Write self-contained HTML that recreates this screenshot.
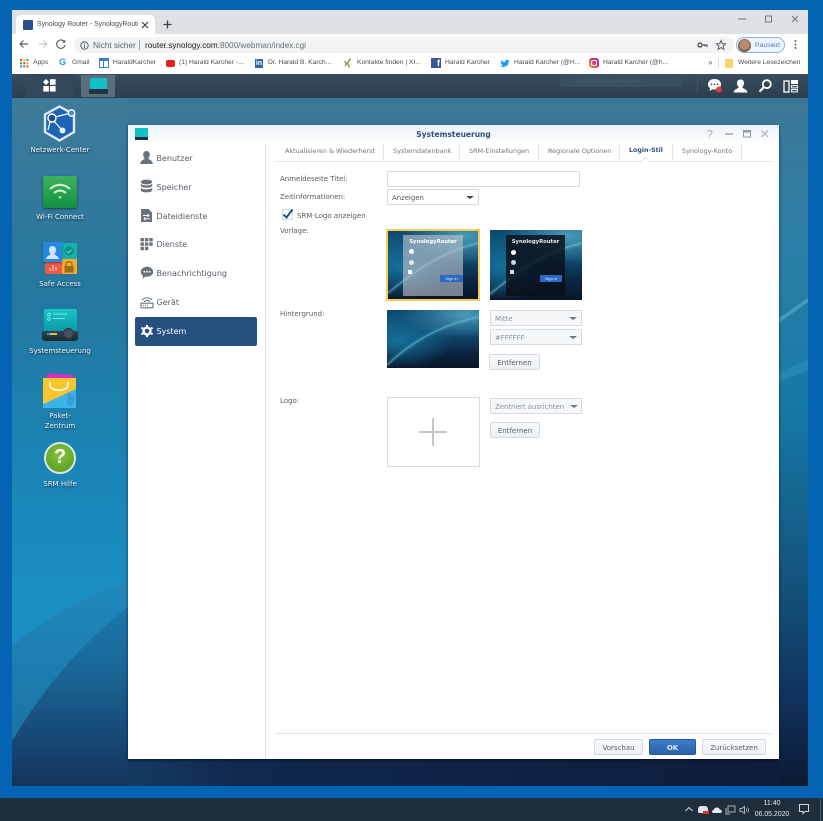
<!DOCTYPE html>
<html lang="de"><head><meta charset="utf-8"><title>Synology Router</title>
<style>
*{box-sizing:border-box}
html,body{margin:0;padding:0;width:823px;height:821px;overflow:hidden;background:#0563b4;font-family:"Liberation Sans","DejaVu Sans",sans-serif}
.a{position:absolute}
.t{position:absolute;white-space:nowrap}
.bm{position:absolute;top:58px;font-size:6.7px;color:#4a4d50;white-space:nowrap;line-height:10px}
.ic{position:absolute;top:58px;width:10px;height:10px}
.dl{position:absolute;width:100px;text-align:center;color:#f2f6f8;font-size:7px;line-height:10px;text-shadow:0 1px 2px #123;font-family:"DejaVu Sans",sans-serif;left:10px}
.nav{position:absolute;left:156.5px;font-size:8px;color:#555e68;font-family:"DejaVu Sans",sans-serif;line-height:12px;white-space:nowrap}
.tab{position:absolute;top:146px;font-size:6.45px;color:#6c7680;font-family:"DejaVu Sans",sans-serif;line-height:10px;white-space:nowrap}
.sep{position:absolute;top:144px;width:1px;height:16px;background:#e3e7eb}
.lb{position:absolute;left:280px;font-size:7px;color:#555e66;font-family:"DejaVu Sans",sans-serif;line-height:10px;white-space:nowrap}
.inp{position:absolute;background:#fff;border:1px solid #d4dbe2;border-radius:1px;font-size:6.9px;color:#4f5860;font-family:"DejaVu Sans",sans-serif;line-height:16px;padding-left:4px;white-space:nowrap}
.dis{background:#f6f7f9;color:#8a9299}
.car{position:absolute;right:4px;top:6px;width:0;height:0;border-left:4px solid transparent;border-right:4px solid transparent;border-top:3px solid #6c7680}
.btn{position:absolute;background:linear-gradient(#f7f9fb,#edf1f5);border:1px solid #d2dae2;border-radius:2px;font-size:7px;color:#58626c;font-family:"DejaVu Sans",sans-serif;text-align:center;line-height:16px;white-space:nowrap}
.pre{position:absolute;overflow:hidden;background:radial-gradient(70% 40% at 85% 8%,#4a9ab8,rgba(74,154,184,0)),radial-gradient(60% 50% at 12% 52%,#15709a,rgba(21,112,154,0)),linear-gradient(#0e4a70,#0f4a70 40%,#0a2440 75%,#0a1528)}
.pre svg{position:absolute;left:0;top:0}
</style></head><body>

<!-- Browser chrome -->
<div class="a" style="left:12px;top:10px;width:796px;height:24px;background:#dee1e6"></div>
<div class="a" style="left:16px;top:15px;width:139px;height:19px;background:#fff;border-radius:5px 5px 0 0"></div>
<div class="a" style="left:23px;top:20px;width:10px;height:10px;background:#27508f;border-radius:1px"></div>
<div class="t" style="left:37px;top:20px;width:101px;overflow:hidden;font-size:6.9px;line-height:10px;color:#4a4d50">Synology Router - SynologyRouter</div>
<svg class="a" style="left:140px;top:20px" width="10" height="10"><path d="M2 2L8 8M8 2L2 8" stroke="#3c4043" stroke-width="1.2"/></svg>
<svg class="a" style="left:162px;top:19px" width="11" height="11"><path d="M5.5 1.5V9.5M1.5 5.5H9.5" stroke="#3c4043" stroke-width="1.3"/></svg>
<svg class="a" style="left:736px;top:13px" width="66" height="12"><path d="M2 6H10" stroke="#70757a"/><rect x="29.5" y="3" width="6" height="6" fill="none" stroke="#70757a"/><path d="M56 3L62 9M62 3L56 9" stroke="#70757a"/></svg>

<div class="a" style="left:12px;top:34px;width:796px;height:19px;background:#fff"></div>
<svg class="a" style="left:18px;top:38px" width="50" height="12"><path d="M10 6H2M5.5 2.5L2 6L5.5 9.5" fill="none" stroke="#5f6368" stroke-width="1.2"/><path d="M21 6H29M25.5 2.5L29 6L25.5 9.5" fill="none" stroke="#c4c7ca" stroke-width="1.2"/></svg>
<svg class="a" style="left:55px;top:38px" width="12" height="12"><path d="M9.5 4A4.2 4.2 0 1 0 10 7" fill="none" stroke="#5f6368" stroke-width="1.2"/><path d="M10.3 1.5V4.8H7" fill="#5f6368"/></svg>
<div class="a" style="left:74px;top:37px;width:660px;height:16px;background:#f1f3f4;border-radius:8px"></div>
<svg class="a" style="left:79px;top:40px" width="11" height="11"><circle cx="5.5" cy="5.5" r="3.7" fill="none" stroke="#5f6368"/><path d="M5.5 5V8M5.5 3.2V4.2" stroke="#5f6368"/></svg>
<div class="t" style="left:93px;top:40px;font-size:8.2px;line-height:11px;color:#5f6368">Nicht sicher</div>
<div class="a" style="left:139px;top:40px;width:1px;height:10px;background:#9aa0a6"></div>
<div class="t" style="left:145px;top:40px;font-size:8.2px;line-height:11px;color:#6b6f73"><span style="color:#202124">router.synology.com</span>:8000/webman/index.cgi</div>
<svg class="a" style="left:697px;top:40px" width="11" height="10"><circle cx="3" cy="5" r="2" fill="none" stroke="#3c4043" stroke-width="1.2"/><path d="M5 5H10V7M8 5V6.5" fill="none" stroke="#3c4043"/></svg>
<svg class="a" style="left:715px;top:39px" width="12" height="12"><path d="M6 1.5L7.3 4.6L10.6 4.9L8.1 7.1L8.9 10.4L6 8.6L3.1 10.4L3.9 7.1L1.4 4.9L4.7 4.6Z" fill="none" stroke="#5f6368"/></svg>
<div class="a" style="left:736px;top:37px;width:49px;height:16px;background:#eef3fd;border:1px solid #8ab0ea;border-radius:8px"></div>
<div class="a" style="left:738px;top:39px;width:13px;height:13px;border-radius:50%;background:radial-gradient(circle at 50% 45%,#b98a6c 0 45%,#5a3d30 75%)"></div>
<div class="t" style="left:755px;top:40px;font-size:6.8px;line-height:11px;color:#4a78cc">Pausiert</div>
<svg class="a" style="left:793px;top:39px" width="5" height="11"><circle cx="2.5" cy="2" r="1" fill="#5f6368"/><circle cx="2.5" cy="5.5" r="1" fill="#5f6368"/><circle cx="2.5" cy="9" r="1" fill="#5f6368"/></svg>

<div class="a" style="left:12px;top:53px;width:796px;height:21px;background:#fff"></div>
<svg class="ic" style="left:20px;top:59px" width="9" height="9"><g><rect x="0" y="0" width="2" height="2" fill="#ea4335"/><rect x="3.2" y="0" width="2" height="2" fill="#fbbc05"/><rect x="6.4" y="0" width="2" height="2" fill="#4285f4"/><rect x="0" y="3.2" width="2" height="2" fill="#34a853"/><rect x="3.2" y="3.2" width="2" height="2" fill="#ea4335"/><rect x="6.4" y="3.2" width="2" height="2" fill="#fbbc05"/><rect x="0" y="6.4" width="2" height="2" fill="#4285f4"/><rect x="3.2" y="6.4" width="2" height="2" fill="#34a853"/><rect x="6.4" y="6.4" width="2" height="2" fill="#ea4335"/></g></svg>
<div class="bm" style="left:33px">Apps</div>
<div class="t" style="left:59px;top:57px;font-size:9px;font-weight:bold;line-height:11px;color:#4285f4">G</div>
<div class="bm" style="left:72px">Gmail</div>
<div class="a" style="left:99px;top:58px;width:10px;height:10px;border:1.5px solid #3d7ec9;border-top-width:3px"><div style="width:1px;height:6px;background:#3d7ec9;margin-left:3px"></div></div>
<div class="bm" style="left:113px">HaraldKarcher</div>
<div class="a" style="left:166px;top:60px;width:9px;height:7px;background:#e62117;border-radius:2px"></div>
<div class="bm" style="left:179px">(1) Harald Karcher -...</div>
<div class="a" style="left:255px;top:59px;width:8px;height:9px;background:#2e6ba8;color:#fff;font-size:7px;line-height:9px;font-weight:bold;text-align:center">in</div>
<div class="bm" style="left:268px">Dr. Harald B. Karch...</div>
<svg class="a" style="left:344px;top:58px" width="8" height="10"><path d="M0.5 3L2.5 6L1 8M6.5 0.5L3.5 5L5.5 9.5" fill="none" stroke="#7a9a2a" stroke-width="1.3"/></svg>
<div class="bm" style="left:357px">Kontakte finden | XI...</div>
<div class="a" style="left:431px;top:58px;width:10px;height:10px;background:#3b5998;color:#fff;font-size:9px;line-height:11px;font-weight:bold;text-align:right;padding-right:1px">f</div>
<div class="bm" style="left:445px">Harald Karcher</div>
<svg class="a" style="left:500px;top:59px" width="10" height="9"><path d="M0.5 7.5C4 9 9 7 8.7 2.5L9.7 1.3L8.4 1.5C7.5 0.2 5 .5 5 3C3.4 3 2 2.2 1 1C.5 2.2 1 3.4 1.7 4L.8 3.8C.9 5 1.7 5.5 2.5 5.8C2.5 6.6 1.8 7.2.5 7.5Z" fill="#1da1f2"/></svg>
<div class="bm" style="left:514px">Harald Karcher (@H...</div>
<div class="a" style="left:589px;top:58px;width:10px;height:10px;border-radius:3px;background:linear-gradient(45deg,#f9a83a,#e1306c 55%,#7a3ec8)"><div style="margin:2px;width:6px;height:6px;border:1px solid #fff;border-radius:2px"></div></div>
<div class="bm" style="left:603px">Harald Karcher (@h...</div>
<div class="t" style="left:708px;top:58px;font-size:8px;line-height:10px;color:#5f6368">»</div>
<div class="a" style="left:718px;top:58px;width:1px;height:10px;background:#dadce0"></div>
<div class="a" style="left:725px;top:59px;width:8px;height:9px;background:#f8d568;border-radius:1px"></div>
<div class="bm" style="left:738px">Weitere Lesezeichen</div>

<!-- DSM taskbar -->
<div class="a" style="left:12px;top:74px;width:796px;height:24px;background:linear-gradient(#3a4d5e,#2c3f50)"></div>
<div class="a" style="left:25px;top:74px;width:50px;height:23px;background:#33485a"></div>
<svg class="a" style="left:43px;top:79px" width="13" height="13"><path d="M3 0L6 3L3 6L0 3Z" fill="#fff"/><rect x="7" y="0.2" width="5.6" height="5.6" fill="#fff"/><rect x="0.3" y="7" width="5.6" height="5.6" fill="#fff"/><rect x="7" y="7" width="5.6" height="5.6" fill="#fff"/></svg>
<div class="a" style="left:81px;top:75px;width:34px;height:22px;background:#5c6e7c"></div>
<div class="a" style="left:90px;top:78px;width:17px;height:11px;background:#13c0c8;border-radius:1px"></div>
<div class="a" style="left:89px;top:89px;width:19px;height:5px;background:#1f3341;border-radius:1px"></div>
<div class="a" style="left:560px;top:76px;width:122px;height:11px;background:#3a5061"></div>
<div class="t" style="left:575px;top:77px;font-size:6.5px;line-height:9px;color:#46596a">Nachrichten Abonnieren</div>
<div class="a" style="left:697px;top:79px;width:1px;height:14px;background:#44576a"></div>
<svg class="a" style="left:707px;top:78px" width="18" height="16"><path d="M7.5 1C11.5 1 14 3.3 14 6.3S11.5 11.5 7.5 11.5C6.8 11.5 6 11.4 5.4 11.2L2.5 13L3 10.3C1.7 9.4 1 8 1 6.3C1 3.3 3.5 1 7.5 1Z" fill="#fff"/><circle cx="4.5" cy="6.3" r=".9" fill="#44576a"/><circle cx="7.5" cy="6.3" r=".9" fill="#44576a"/><circle cx="10.5" cy="6.3" r=".9" fill="#44576a"/><circle cx="12" cy="11.5" r="3" fill="#e8383d"/></svg>
<svg class="a" style="left:733px;top:79px" width="15" height="14"><path d="M7.5 0.5C10 0.5 11 2.3 11 4.3C11 6 10 7.6 9.3 8.2C9.3 9.5 14 9.7 14.4 13.5H0.6C1 9.7 5.7 9.5 5.7 8.2C5 7.6 4 6 4 4.3C4 2.3 5 .5 7.5 .5Z" fill="#fff"/></svg>
<svg class="a" style="left:758px;top:79px" width="15" height="14"><circle cx="8.8" cy="5.2" r="4" fill="none" stroke="#fff" stroke-width="1.8"/><path d="M5.8 8.2L1.5 12.6" stroke="#fff" stroke-width="2.2"/></svg>
<svg class="a" style="left:783px;top:79px" width="16" height="14"><rect x="1" y="2" width="5" height="11" fill="none" stroke="#fff" stroke-width="1.3"/><rect x="8" y="1" width="7" height="4" fill="#fff"/><rect x="8.6" y="6.6" width="5.8" height="2.3" fill="none" stroke="#fff"/><rect x="8.6" y="10.6" width="5.8" height="2.3" fill="none" stroke="#fff"/></svg>

<!-- Desktop wallpaper -->
<svg class="a" style="left:12px;top:98px" width="796" height="688" viewBox="12 98 796 688">
<defs>
<linearGradient id="gr" gradientUnits="userSpaceOnUse" x1="0" y1="98" x2="0" y2="786"><stop offset="0" stop-color="#3d7797"/><stop offset=".22" stop-color="#2a7fa6"/><stop offset=".45" stop-color="#157aa5"/><stop offset=".6" stop-color="#14648e"/><stop offset=".75" stop-color="#134b74"/><stop offset=".88" stop-color="#10305a"/><stop offset="1" stop-color="#0b1a32"/></linearGradient>
<linearGradient id="gl" gradientUnits="userSpaceOnUse" x1="0" y1="98" x2="0" y2="786"><stop offset="0" stop-color="#3f7a9a"/><stop offset=".3" stop-color="#23789f"/><stop offset=".52" stop-color="#1a84b5"/><stop offset=".72" stop-color="#1a8ec2"/></linearGradient>
<linearGradient id="gd" gradientUnits="userSpaceOnUse" x1="0" y1="600" x2="0" y2="786"><stop offset="0" stop-color="#1b76aa"/><stop offset=".3" stop-color="#1a6c9e"/><stop offset=".65" stop-color="#17507e"/><stop offset="1" stop-color="#14345c"/></linearGradient>
<linearGradient id="gb" gradientUnits="userSpaceOnUse" x1="0" y1="583" x2="0" y2="741"><stop offset="0" stop-color="#1f88bb"/><stop offset="1" stop-color="#1c74a6"/></linearGradient>
<linearGradient id="gh" gradientUnits="userSpaceOnUse" x1="128" y1="0" x2="779" y2="0"><stop offset="0" stop-color="#153a62"/><stop offset=".18" stop-color="#10284e"/><stop offset="1" stop-color="#0d1d3a"/></linearGradient>
</defs>
<rect x="12" y="98" width="796" height="688" fill="url(#gr)"/>
<rect x="12" y="98" width="116" height="688" fill="url(#gl)"/>
<path d="M12 646Q70 600 128 582L128 607Q60 660 12 741Z" fill="url(#gb)"/>
<path d="M12 741Q60 660 128 607V786H12Z" fill="url(#gd)"/>
<rect x="128" y="755" width="651" height="31" fill="url(#gh)"/>
<path d="M779 318L808 298L808 302L779 323Z" fill="#5fb3d3" opacity=".55"/>
<path d="M779 372L808 360L808 370L779 382Z" fill="#3d9cc4" opacity=".35"/>
</svg>

<!-- Desktop icons -->
<svg class="a" style="left:41px;top:105px" width="38" height="37"><path d="M18.5 1.5L33 9.5V27L18.5 35.5L4 27V9.5Z" fill="#1c64b8" stroke="#dfe9f3" stroke-width="2.4"/><path d="M10 13L30 8M10 13L21 25M10 13L7 25" stroke="#fff" stroke-width="1.2"/><circle cx="11" cy="13" r="4" fill="#1c4e8f" stroke="#fff" stroke-width="1.4"/><circle cx="30.5" cy="8" r="3.2" fill="#3d8ad0" stroke="#fff" stroke-width="1.4"/><circle cx="21.5" cy="25.5" r="3" fill="#e6f0f8"/></svg>
<div class="dl" style="top:145px">Netzwerk-Center</div>
<div class="a" style="left:43px;top:176px;width:34px;height:32px;background:linear-gradient(#3bb45a,#149045);border-radius:2px;box-shadow:0 1px 2px rgba(0,0,0,.5)"></div>
<svg class="a" style="left:47px;top:181px" width="26" height="22"><path d="M3 8C9 2.5 17 2.5 23 8M7 12C11 8.8 15 8.8 19 12" fill="none" stroke="#c8ecc8" stroke-width="2.2"/><path d="M11 15.5H15L13 18Z" fill="#c8ecc8"/></svg>
<div class="dl" style="top:212px">Wi-Fi Connect</div>
<div class="a" style="left:62px;top:243px;width:15px;height:16px;background:#12b3ae"></div>
<div class="a" style="left:62px;top:259px;width:15px;height:15px;background:#f5ab2f"></div>
<div class="a" style="left:45px;top:262px;width:17px;height:12px;background:#ea5c45"></div>
<div class="a" style="left:43px;top:242px;width:19px;height:20px;background:#2a86e3;box-shadow:0 1px 2px rgba(0,0,0,.4)"></div>
<svg class="a" style="left:43px;top:242px" width="36" height="33"><path d="M9.5 4C12 4 13 6 13 8C13 10 12 11 11.5 12C12 13.5 16 14 16 17H3C3 14 7 13.5 7.5 12C7 11 6 10 6 8C6 6 7 4 9.5 4Z" fill="#cfe4f6"/><circle cx="26" cy="9" r="4.5" fill="#0b8f8a"/><path d="M23.5 9L25.5 11L28.5 7.5" stroke="#6fd8d0" fill="none"/><rect x="21.5" y="24" width="9" height="6.5" fill="#9c6a1c"/><path d="M23 24V22C23 19 29 19 29 22V24" fill="none" stroke="#9c6a1c" stroke-width="1.4"/><path d="M7 29V26M10 29V23M13 29V25" stroke="#f9b0a0" stroke-width="1.5"/></svg>
<div class="dl" style="top:279px">Safe Access</div>
<div class="a" style="left:44px;top:309px;width:33px;height:22px;background:linear-gradient(#16c6c6,#0e9aa8);border-radius:2px 2px 0 0"></div>
<div class="a" style="left:42px;top:331px;width:36px;height:10px;background:linear-gradient(#33434f,#1d2a35);border-radius:0 0 3px 3px"></div>
<div class="a" style="left:63px;top:328px;width:11px;height:11px;background:#43525e;border-radius:50%;border:1px solid #2a3640"></div>
<div class="a" style="left:47px;top:333px;width:10px;height:2px;background:linear-gradient(90deg,#3f8fd8 30%,#d8c040 30%)"></div>
<svg class="a" style="left:46px;top:312px" width="24" height="14"><path d="M7 2H21M7 6.5H19" stroke="#7fe2e2"/><circle cx="3" cy="2.5" r="1.4" fill="none" stroke="#7fe2e2"/><circle cx="3" cy="7" r="1.4" fill="none" stroke="#7fe2e2"/></svg>
<div class="dl" style="top:346px">Systemsteuerung</div>
<div class="a" style="left:47px;top:374px;width:26px;height:6px;background:#d62fc0;transform:rotate(4deg)"></div>
<div class="a" style="left:43px;top:378px;width:33px;height:30px;background:linear-gradient(155deg,#f7c52e 0 58%,#3bb5e8 58%)"></div>
<svg class="a" style="left:43px;top:378px" width="36" height="32"><path d="M7 4V7C7 14 25 14 25 7V4" fill="none" stroke="#fff" stroke-width="1.5"/><path d="M25 14L32 19L29 29L23 25Z" fill="#3aa0d8"/></svg>
<div class="dl" style="top:412px;line-height:9.6px">Paket-<br>Zentrum</div>
<div class="a" style="left:44px;top:442px;width:32px;height:32px;border-radius:50%;background:radial-gradient(circle at 50% 35%,#86c440,#4f9a1c);border:2.5px solid #d9e6dc;color:#fff;font:bold 20px/27px 'Liberation Sans',sans-serif;text-align:center">?</div>
<div class="dl" style="top:479px">SRM Hilfe</div>

<!-- Window -->
<div class="a" style="left:128px;top:125px;width:651px;height:634px;background:#fff;box-shadow:0 1px 3px rgba(0,0,0,.6)"></div>
<div class="a" style="left:128px;top:125px;width:651px;height:18px;background:linear-gradient(#e8f2fa,#fff)"></div>
<div class="a" style="left:135px;top:128px;width:13px;height:9px;background:#13c0c8"></div>
<div class="a" style="left:135px;top:137px;width:13px;height:3px;background:#1d2d38"></div>
<div class="t" style="left:128px;width:651px;text-align:center;top:129px;font-family:'DejaVu Sans',sans-serif;font-size:7.5px;line-height:11px;font-weight:bold;color:#2c4f7f">Systemsteuerung</div>
<svg class="a" style="left:704px;top:129px" width="66" height="10"><path d="M3 2.5C5 1 8 1.5 8 3.2C8 5 5.5 4.8 5.5 6.5M5.5 7.6V9" fill="none" stroke="#a8b2bc" stroke-width="1"/><path d="M21 5H29" stroke="#8e99a4" stroke-width="1.3"/><rect x="39.5" y="1.5" width="7" height="6.5" fill="none" stroke="#8e99a4" stroke-width="1"/><rect x="39.5" y="1.5" width="7" height="2" fill="#8e99a4"/><path d="M57.5 1.5L64 8M64 1.5L57.5 8" stroke="#a0aab4"/></svg>

<!-- Sidebar -->
<div class="a" style="left:265px;top:143px;width:1px;height:616px;background:#e2e4e7"></div>
<svg class="a" style="left:139px;top:150px" width="15" height="15"><path d="M7.5 1C10 1 10.8 3 10.8 4.8C10.8 6.3 10 7.7 9.3 8.4C9.3 9.6 13.5 9.8 13.8 14H1.2C1.5 9.8 5.7 9.6 5.7 8.4C5 7.7 4.2 6.3 4.2 4.8C4.2 3 5 1 7.5 1Z" fill="#6a737c"/></svg>
<div class="nav" style="top:152.5px">Benutzer</div>
<svg class="a" style="left:140px;top:179px" width="13" height="15"><ellipse cx="6.5" cy="3" rx="5.7" ry="2.4" fill="#6a737c"/><path d="M.8 4.6C2 7 11 7 12.2 4.6V7C11 9.4 2 9.4 .8 7ZM.8 8.6C2 11 11 11 12.2 8.6V11.5C11 14 2 14 .8 11.5Z" fill="#6a737c"/></svg>
<div class="nav" style="top:181.5px">Speicher</div>
<svg class="a" style="left:140px;top:208px" width="13" height="15"><path d="M1 1H8.5L12 4.5V14H1Z" fill="#6a737c"/><path d="M3 7.5H9M7.5 6L9 7.5L7.5 9M10 10.8H4M5.5 9.3L4 10.8L5.5 12.3" fill="none" stroke="#fff" stroke-width=".9"/></svg>
<div class="nav" style="top:210.5px">Dateidienste</div>
<svg class="a" style="left:140px;top:237px" width="13" height="14" fill="#6a737c"><rect x="0.5" y="1" width="3.4" height="3.4"/><rect x="4.9" y="1" width="3.4" height="3.4"/><rect x="9.3" y="1" width="3.4" height="3.4"/><rect x="0.5" y="5.4" width="3.4" height="3.4"/><rect x="4.9" y="5.4" width="3.4" height="3.4"/><rect x="9.3" y="5.4" width="3.4" height="3.4"/><rect x="0.5" y="9.8" width="3.4" height="3.4"/><rect x="4.9" y="9.8" width="3.4" height="3.4"/></svg>
<div class="nav" style="top:239px">Dienste</div>
<svg class="a" style="left:140px;top:266px" width="14" height="14"><path d="M7 .8C10.6.8 13.2 3 13.2 5.8S10.6 10.8 7 10.8C6.4 10.8 5.8 10.7 5.3 10.6L2.6 13L3 9.8C1.6 8.9.8 7.5.8 5.8C.8 3 3.4.8 7 .8Z" fill="#6a737c"/><circle cx="4.3" cy="5.8" r=".9" fill="#fff"/><circle cx="7" cy="5.8" r=".9" fill="#fff"/><circle cx="9.7" cy="5.8" r=".9" fill="#fff"/></svg>
<div class="nav" style="top:268px">Benachrichtigung</div>
<svg class="a" style="left:140px;top:295px" width="14" height="14"><path d="M2 5C5 2 9 2 12 5M4 6.8C6 5 8 5 10 6.8" fill="none" stroke="#6a737c" stroke-width="1.1"/><rect x="1" y="8.2" width="12" height="4.6" fill="none" stroke="#6a737c" stroke-width="1.1"/><path d="M3 10.5H8" stroke="#6a737c" stroke-width="1" stroke-dasharray="1 1"/></svg>
<div class="nav" style="top:297px">Gerät</div>
<div class="a" style="left:135px;top:317px;width:122px;height:29px;background:#25507f;border-radius:2px"></div>
<svg class="a" style="left:140px;top:324px" width="14" height="14" viewBox="0 0 15 15"><circle cx="7.5" cy="7.5" r="3.7" fill="none" stroke="#fff" stroke-width="2.6"/><path d="M7.5 1V3M7.5 12V14M1.5 4L3.3 5M11.7 10L13.5 11M13.5 4L11.7 5M3.3 10L1.5 11" stroke="#fff" stroke-width="2.2"/></svg>
<div class="nav" style="top:326px;color:#fff">System</div>

<!-- Tabs -->
<div class="a" style="left:275px;top:161px;width:497px;height:1px;background:#e3e7eb"></div>
<div class="tab" style="left:285px">Aktualisieren &amp; Wiederherst</div>
<div class="sep" style="left:383px"></div>
<div class="tab" style="left:393px">Systemdatenbank</div>
<div class="sep" style="left:459px"></div>
<div class="tab" style="left:469px">SRM-Einstellungen</div>
<div class="sep" style="left:538px"></div>
<div class="tab" style="left:548px">Regionale Optionen</div>
<div class="sep" style="left:619px"></div>
<div class="tab" style="left:629px;color:#2c4f7f;font-weight:bold;font-size:6.3px">Login-Stil</div>
<div class="sep" style="left:672px"></div>
<div class="tab" style="left:682px">Synology-Konto</div>
<div class="sep" style="left:741px"></div>
<div class="a" style="left:642px;top:158px;width:6px;height:6px;background:#fff;border-left:1px solid #e3e7eb;border-top:1px solid #e3e7eb;transform:rotate(45deg)"></div>

<!-- Form -->
<div class="lb" style="top:174px">Anmeldeseite Titel:</div>
<div class="inp" style="left:387px;top:171px;width:193px;height:16px"></div>
<div class="lb" style="top:192px">Zeitinformationen:</div>
<div class="inp" style="left:387px;top:189px;width:92px;height:16px">Anzeigen<span class="car" style="border-top-color:#3c4650"></span></div>
<div class="a" style="left:282px;top:209px;width:11px;height:11px;background:#fdfdfe;border:1px solid #cfd7df;border-radius:1px"></div>
<svg class="a" style="left:281px;top:207px" width="13" height="13"><path d="M2.5 7.5L5.5 10.5L11.5 2.5" fill="none" stroke="#1f4f87" stroke-width="1.9"/></svg>
<div class="lb" style="left:297px;top:210.5px">SRM-Logo anzeigen</div>
<div class="lb" style="top:226px">Vorlage:</div>

<div class="pre" style="left:386px;top:229px;width:94px;height:72px;border:2px solid #f3cf55">
<svg width="90" height="68"><path d="M0 62C25 42 50 22 90 12" fill="none" stroke="#6fd0e2" stroke-width="5" opacity=".14"/><path d="M0 62C25 42 50 22 90 12" fill="none" stroke="#6fd0e2" stroke-width="1.1" opacity=".6"/></svg>
<div class="a" style="left:15px;top:4px;width:60px;height:61px;background:rgba(190,196,205,.62)"></div>
<div class="t" style="left:15px;width:60px;text-align:center;top:7px;font-size:5.3px;font-weight:bold;color:#fff;line-height:8px;font-family:'DejaVu Sans',sans-serif">SynologyRouter</div>
<div class="a" style="left:21px;top:18px;width:5px;height:5px;border-radius:50%;background:#fff"></div>
<div class="a" style="left:21px;top:29px;width:5px;height:5px;border-radius:50%;background:#e4e8ec"></div>
<div class="a" style="left:20px;top:39px;width:4px;height:4px;background:#fff"></div>
<div class="a" style="left:52px;top:44px;width:23px;height:7px;background:#2a6ac4;color:#dfe9f7;font-size:4px;line-height:7px;text-align:center">Sign in</div>
</div>
<div class="pre" style="left:490px;top:230px;width:92px;height:70px">
<svg width="92" height="70"><path d="M0 64C25 44 50 23 92 13" fill="none" stroke="#6fd0e2" stroke-width="5" opacity=".14"/><path d="M0 64C25 44 50 23 92 13" fill="none" stroke="#6fd0e2" stroke-width="1.1" opacity=".6"/></svg>
<div class="a" style="left:16px;top:5px;width:59px;height:61px;background:rgba(10,15,25,.82)"></div>
<div class="t" style="left:16px;width:59px;text-align:center;top:8px;font-size:5.3px;font-weight:bold;color:#e8ecf0;line-height:8px;font-family:'DejaVu Sans',sans-serif">SynologyRouter</div>
<div class="a" style="left:21px;top:20px;width:5px;height:5px;border-radius:50%;background:#fff"></div>
<div class="a" style="left:21px;top:30px;width:5px;height:5px;border-radius:50%;background:#cfd6dc"></div>
<div class="a" style="left:20px;top:40px;width:4px;height:4px;background:#d6dce2"></div>
<div class="a" style="left:50px;top:45px;width:22px;height:7px;background:#2a6ac4;color:#dfe9f7;font-size:4px;line-height:7px;text-align:center">Sign in</div>
</div>

<div class="lb" style="top:309px">Hintergrund:</div>
<div class="pre" style="left:387px;top:310px;width:92px;height:58px">
<svg width="92" height="58"><path d="M0 55C20 36 48 16 92 7" fill="none" stroke="#6fd0e2" stroke-width="5" opacity=".14"/><path d="M0 55C20 36 48 16 92 7" fill="none" stroke="#6fd0e2" stroke-width="1.1" opacity=".6"/></svg>
</div>
<div class="inp dis" style="left:490px;top:310px;width:92px;height:16px">Mitte<span class="car"></span></div>
<div class="inp dis" style="left:490px;top:329px;width:92px;height:16px">#FFFFFF<span class="car"></span></div>
<div class="btn" style="left:489px;top:354px;width:51px;height:16px">Entfernen</div>

<div class="lb" style="top:396px">Logo:</div>
<div class="a" style="left:387px;top:397px;width:93px;height:70px;background:#fff;border:1px solid #d4dbe2"></div>
<div class="a" style="left:419px;top:431px;width:28px;height:2px;background:#c4c8cb"></div>
<div class="a" style="left:432px;top:418px;width:2px;height:28px;background:#c4c8cb"></div>
<div class="inp dis" style="left:490px;top:398px;width:92px;height:16px">Zentriert ausrichten<span class="car" style="right:3px"></span></div>
<div class="btn" style="left:490px;top:422px;width:50px;height:16px">Entfernen</div>

<!-- Footer -->
<div class="a" style="left:275px;top:733px;width:497px;height:1px;background:#e2e5e8"></div>
<div class="btn" style="left:594px;top:739px;width:49px;height:16px">Vorschau</div>
<div class="btn" style="left:649px;top:739px;width:47px;height:16px;background:linear-gradient(#3c7cc8,#2a63ac);border-color:#27578f;color:#dbe8f6;font-weight:bold">OK</div>
<div class="btn" style="left:702px;top:739px;width:64px;height:16px">Zurücksetzen</div>

<!-- Windows taskbar -->
<div class="a" style="left:0;top:798px;width:823px;height:23px;background:#1f2e3b"></div>
<svg class="a" style="left:684px;top:804px" width="10" height="10"><path d="M1.5 7L5 3.5L8.5 7" fill="none" stroke="#cfd6dc"/></svg>
<div class="a" style="left:698px;top:806px;width:10px;height:7px;background:#dfe3e6;border-radius:3px 3px 1px 1px"></div>
<div class="a" style="left:703px;top:811px;width:6px;height:3px;background:#d33"></div>
<svg class="a" style="left:711px;top:805px" width="12" height="9"><path d="M2.5 8C.5 8 .5 5 2.8 5C3 2 8 1.5 8.8 4.6C11.5 4.6 11.5 8 9.5 8Z" fill="#e4e8eb"/></svg>
<svg class="a" style="left:725px;top:805px" width="11" height="10"><rect x="3" y="1" width="7" height="6" fill="none" stroke="#a9b3ba"/><path d="M1 3V9H5" fill="none" stroke="#a9b3ba"/></svg>
<svg class="a" style="left:739px;top:805px" width="11" height="10"><path d="M1 3.5H3L5.5 1.5V8.5L3 6.5H1Z" fill="none" stroke="#a9b3ba"/><path d="M7 3.5C7.8 4.5 7.8 5.5 7 6.5M8.5 2.5C9.8 4 9.8 6 8.5 7.5" fill="none" stroke="#a9b3ba" stroke-width=".8"/></svg>
<div class="t" style="left:755px;width:34px;text-align:center;top:799px;font-size:7px;line-height:10px;color:#e6eaed">11:40</div>
<div class="t" style="left:752px;width:40px;text-align:center;top:810px;font-size:6.9px;line-height:10px;color:#e6eaed">06.05.2020</div>
<svg class="a" style="left:798px;top:803px" width="12" height="12"><path d="M1.5 1.5H10.5V8.5H7L5 10.5V8.5H1.5Z" fill="none" stroke="#d0d6da"/></svg>
<div class="a" style="left:820px;top:798px;width:1px;height:23px;background:#4a5864"></div>
</body></html>
